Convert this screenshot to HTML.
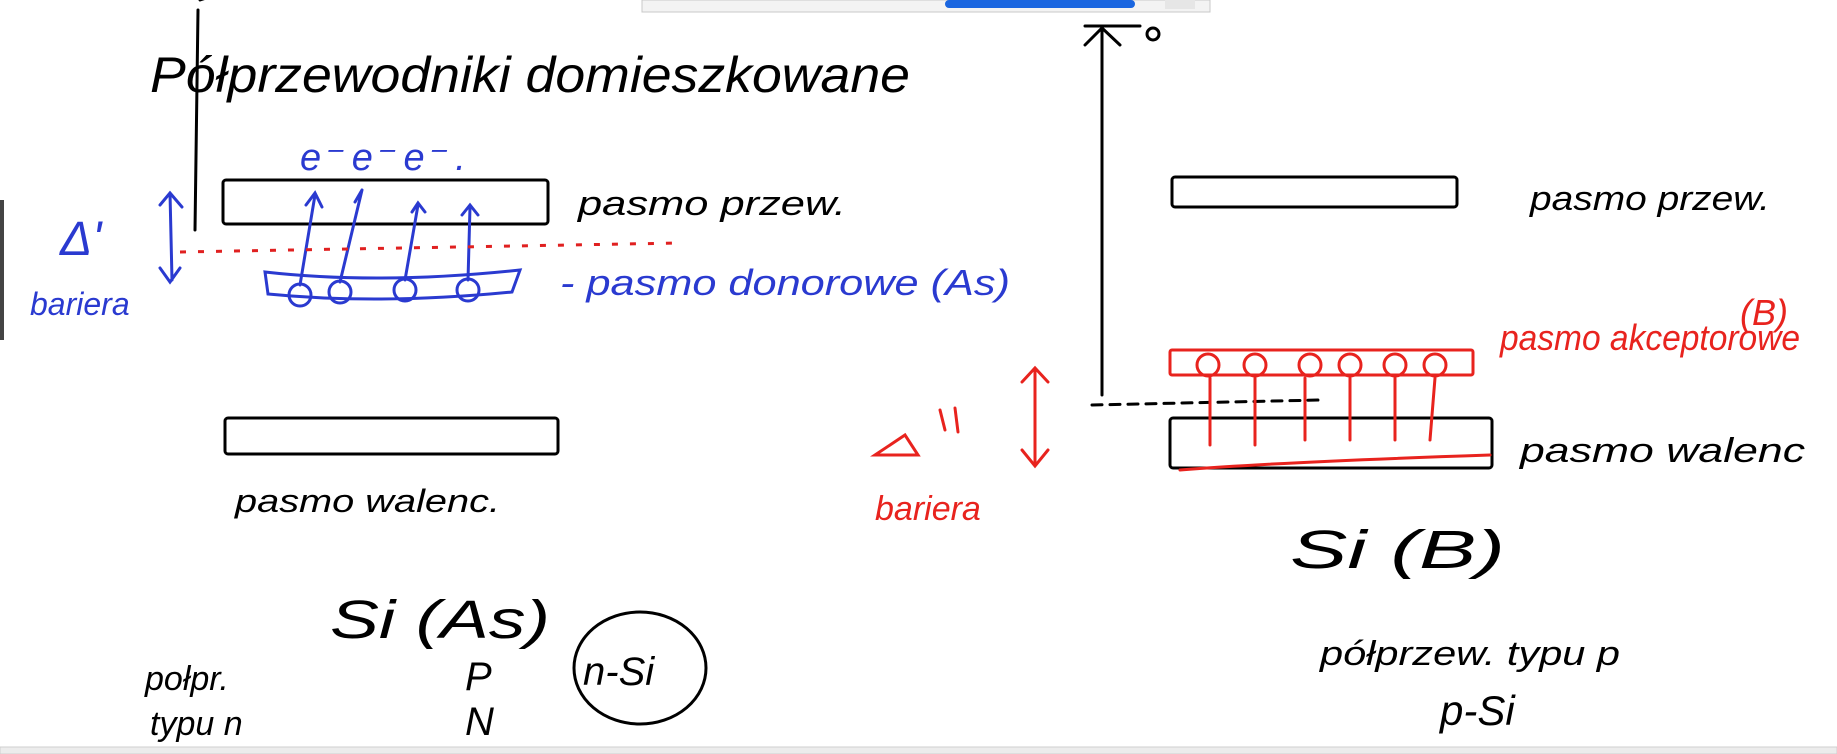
<!DOCTYPE html>
<html><head><meta charset="utf-8"><style>
html,body{margin:0;padding:0;background:#fff;width:1837px;height:754px;overflow:hidden}
svg{display:block}
text{font-family:"Liberation Sans",sans-serif}
</style></head><body>
<svg width="1837" height="754" viewBox="0 0 1837 754" xmlns="http://www.w3.org/2000/svg">
<rect x="642" y="0" width="568" height="12" fill="#f3f3f3" stroke="#c8c8c8"/>
<rect x="945" y="0" width="190" height="8" rx="4" fill="#1a66e0"/>
<rect x="1165" y="0" width="30" height="9" fill="#e6e6e6"/>
<rect x="0" y="747" width="1837" height="7" fill="#ececec" stroke="#cfcfcf"/>
<rect x="0" y="200" width="4" height="140" fill="#444"/>
<g fill="none" stroke="#000" stroke-width="3" stroke-linecap="round">
<path d="M200 0 L215 -5 M198 10 L195 230"/>
<rect x="223" y="180" width="325" height="44" rx="3"/>
<rect x="225" y="418" width="333" height="36" rx="3"/>
<rect x="1172" y="177" width="285" height="30" rx="3"/>
<rect x="1170" y="418" width="322" height="50" rx="3"/>
<path d="M1102 395 L1102 30 M1085 45 L1102 28 L1120 45 M1085 26 L1140 26"/>
<circle cx="1153" cy="34" r="6"/>
<path d="M1092 405 L1320 400" stroke-dasharray="10 8"/>
<ellipse cx="640" cy="668" rx="66" ry="56"/>
</g>
<g fill="none" stroke="#2a3ad0" stroke-width="3" stroke-linecap="round">
<path d="M170 193 L172 280 M160 205 L170 193 L182 207 M160 268 L170 282 L180 268"/>
<path d="M265 272 Q380 285 520 270 L512 292 Q380 305 268 294 Z"/>
<circle cx="300" cy="295" r="11"/><circle cx="340" cy="292" r="11"/><circle cx="405" cy="290" r="11"/><circle cx="468" cy="290" r="11"/>
<path d="M300 285 L315 195 M306 205 L315 193 L322 207 M340 282 L362 190 M355 202 L362 190 M405 280 L418 205 M412 212 L418 203 L425 212 M468 280 L470 207 M462 215 L470 205 L478 215"/>
</g>
<path d="M180 252 L680 243" stroke="#e02020" stroke-width="3" stroke-dasharray="6 12" fill="none"/>
<g fill="none" stroke="#e8231e" stroke-width="3" stroke-linecap="round">
<rect x="1170" y="350" width="303" height="25" rx="2"/>
<circle cx="1208" cy="365" r="11"/><circle cx="1255" cy="365" r="11"/><circle cx="1310" cy="365" r="11"/><circle cx="1350" cy="365" r="11"/><circle cx="1395" cy="365" r="11"/><circle cx="1435" cy="365" r="11"/>
<path d="M1210 378 L1210 445 M1255 378 L1255 445 M1305 378 L1305 440 M1350 378 L1350 440 M1395 378 L1395 440 M1435 378 L1430 440"/>
<path d="M1180 470 Q1280 462 1490 455"/>
<path d="M1035 370 L1035 465 M1022 382 L1035 368 L1048 382 M1022 450 L1035 466 L1048 450"/>
<path d="M875 455 L905 435 L918 455 Z M940 410 L945 430 M955 408 L958 432"/>
</g>
<g font-size="42" fill="#000" font-style="italic">
<text x="150" y="92" font-size="50" textLength="760" lengthAdjust="spacingAndGlyphs">Półprzewodniki domieszkowane</text>
<text x="578" y="215" font-size="34" textLength="268" lengthAdjust="spacingAndGlyphs">pasmo przew.</text>
<text x="1530" y="210" font-size="34" textLength="240" lengthAdjust="spacingAndGlyphs">pasmo przew.</text>
<text x="235" y="512" font-size="32" textLength="265" lengthAdjust="spacingAndGlyphs">pasmo walenc.</text>
<text x="1520" y="462" font-size="34" textLength="285" lengthAdjust="spacingAndGlyphs">pasmo walenc</text>
<text x="330" y="638" font-size="54" textLength="220" lengthAdjust="spacingAndGlyphs">Si (As)</text>
<text x="1290" y="568" font-size="54" textLength="215" lengthAdjust="spacingAndGlyphs">Si (B)</text>
<text x="145" y="690" font-size="34">połpr.</text>
<text x="150" y="735" font-size="34">typu n</text>
<text x="465" y="690" font-size="40">P</text>
<text x="465" y="735" font-size="40">N</text>
<text x="583" y="685" font-size="40">n-Si</text>
<text x="1320" y="665" font-size="34" textLength="300" lengthAdjust="spacingAndGlyphs">półprzew. typu p</text>
<text x="1440" y="725" font-size="42">p-Si</text>
</g>
<g fill="#2a3ad0" font-style="italic">
<text x="300" y="170" font-size="38">e⁻ e⁻ e⁻ .</text>
<text x="60" y="255" font-size="48">Δ'</text>
<text x="30" y="315" font-size="32">bariera</text>
<text x="560" y="295" font-size="36" textLength="450" lengthAdjust="spacingAndGlyphs">- pasmo donorowe (As)</text>
</g>
<g fill="#e8231e" font-style="italic">
<text x="1740" y="325" font-size="36">(B)</text>
<text x="1500" y="350" font-size="36" textLength="300" lengthAdjust="spacingAndGlyphs">pasmo akceptorowe</text>
<text x="875" y="520" font-size="34">bariera</text>
</g>
</svg>
</body></html>
